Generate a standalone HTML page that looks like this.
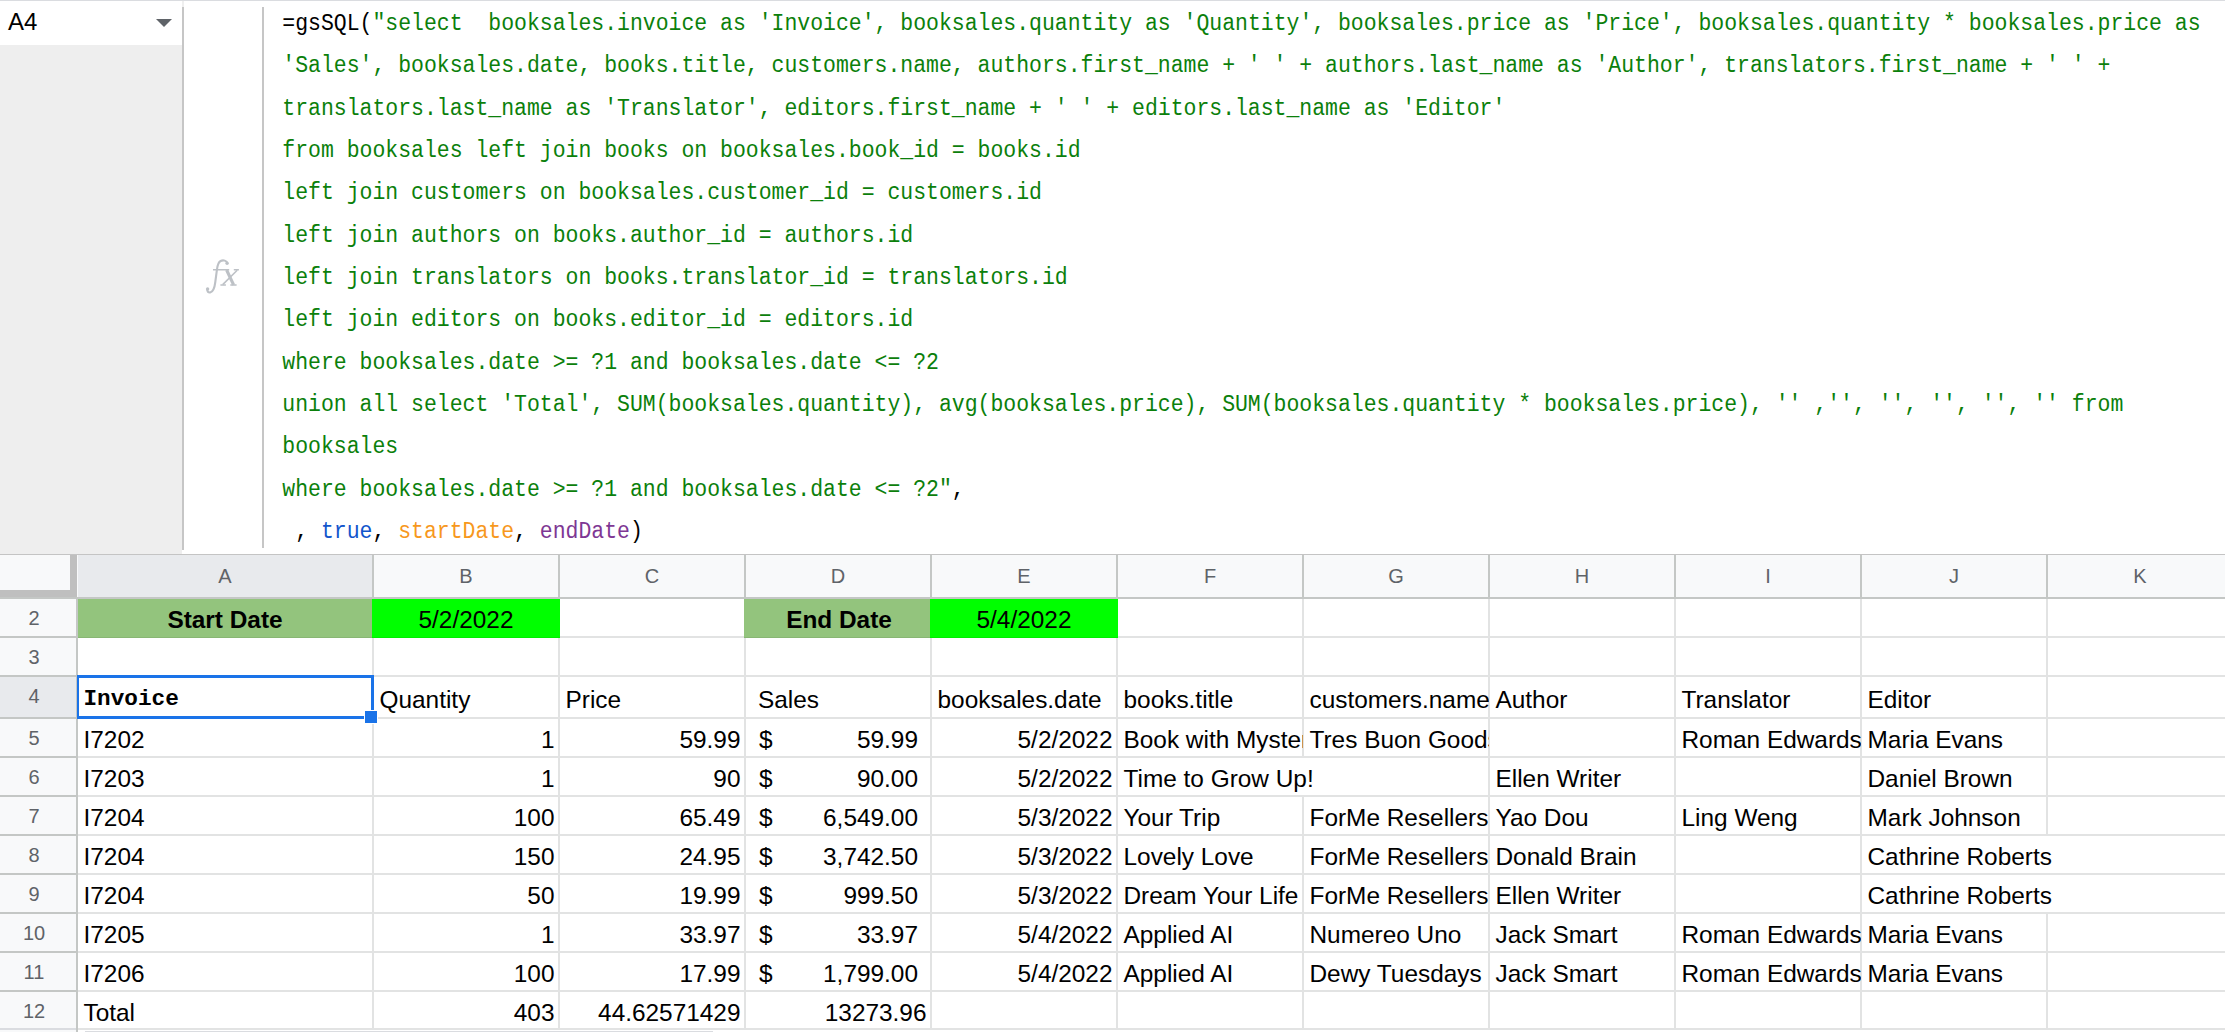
<!DOCTYPE html><html><head><meta charset="utf-8"><style>
*{margin:0;padding:0;box-sizing:border-box}
html,body{width:2225px;height:1032px;overflow:hidden;background:#fff;position:relative}
div,span{position:absolute}
.m{transform:scaleY(1.12);transform-origin:0 17.87px;font-family:"Liberation Mono",monospace;font-size:21.47px;line-height:24.321216px;white-space:pre;color:#0b800b;letter-spacing:-0.009px}
.m span{position:static}
.k{color:#000}
.s{font-family:"Liberation Sans",sans-serif;font-size:24.4px;line-height:27.2548px;white-space:pre;color:#000}
.c{overflow:hidden}
.hd{font-family:"Liberation Sans",sans-serif;font-size:20px;line-height:22.34px;color:#5f6368;text-align:center;white-space:pre}
</style></head><body>
<div style="left:0;top:0;width:2225px;height:1px;background:#dadce0"></div>
<div style="left:0;top:1px;width:182px;height:44px;background:#fff"></div>
<div style="left:0;top:45px;width:182px;height:509px;background:#eeeeee"></div>
<div class="s" style="left:8px;top:8.28px;font-size:24px">A4</div>
<svg style="position:absolute;left:156px;top:19px" width="16" height="8" viewBox="0 0 16 8"><path d="M0 0H16L8 8Z" fill="#5f6368"/></svg>
<div style="left:182px;top:1px;width:2px;height:6px;background:#efefef"></div>
<div style="left:182px;top:7px;width:2px;height:543px;background:#c6c6c6"></div>
<div style="left:262px;top:7px;width:2px;height:541px;background:#c6c6c6"></div>
<svg style="position:absolute;left:200px;top:255px" width="45" height="45" viewBox="0 0 45 45"><g fill="none" stroke="#bdc1c6" stroke-linecap="butt"><path d="M27.4 8.4 C26.8 5.6 23.2 4.6 20.6 6 C18 7.5 17.3 11 16.9 15 L15.3 27 C14.7 32 13.6 36.6 10.2 37.4 C8.2 37.8 6.9 36.2 7.5 34.4" stroke-width="2.1"/><path d="M13 14.8 H29.2 M33.8 14.8 H38.9 M20.4 29.9 H25.9 M30.3 29.9 H36.6" stroke-width="1.5"/><path d="M26.6 15 L33.6 29.8" stroke-width="3.1"/><path d="M37.2 15.3 L22.7 29.6" stroke-width="1.6"/></g><circle cx="27.1" cy="8.3" r="1.7" fill="#bdc1c6"/><circle cx="7.6" cy="34" r="1.7" fill="#bdc1c6"/></svg>
<div class="m" style="left:282.3px;top:11.93px"><span style="color:#000">=gsSQL(</span><span style="color:#0b800b">&quot;select  booksales.invoice as &#x27;Invoice&#x27;, booksales.quantity as &#x27;Quantity&#x27;, booksales.price as &#x27;Price&#x27;, booksales.quantity * booksales.price as</span></div>
<div class="m" style="left:282.3px;top:54.26px"><span style="color:#0b800b">&#x27;Sales&#x27;, booksales.date, books.title, customers.name, authors.first_name + &#x27; &#x27; + authors.last_name as &#x27;Author&#x27;, translators.first_name + &#x27; &#x27; +</span></div>
<div class="m" style="left:282.3px;top:96.59px"><span style="color:#0b800b">translators.last_name as &#x27;Translator&#x27;, editors.first_name + &#x27; &#x27; + editors.last_name as &#x27;Editor&#x27;</span></div>
<div class="m" style="left:282.3px;top:138.92px"><span style="color:#0b800b">from booksales left join books on booksales.book_id = books.id</span></div>
<div class="m" style="left:282.3px;top:181.25px"><span style="color:#0b800b">left join customers on booksales.customer_id = customers.id</span></div>
<div class="m" style="left:282.3px;top:223.58px"><span style="color:#0b800b">left join authors on books.author_id = authors.id</span></div>
<div class="m" style="left:282.3px;top:265.91px"><span style="color:#0b800b">left join translators on books.translator_id = translators.id</span></div>
<div class="m" style="left:282.3px;top:308.24px"><span style="color:#0b800b">left join editors on books.editor_id = editors.id</span></div>
<div class="m" style="left:282.3px;top:350.57px"><span style="color:#0b800b">where booksales.date &gt;= ?1 and booksales.date &lt;= ?2</span></div>
<div class="m" style="left:282.3px;top:392.90px"><span style="color:#0b800b">union all select &#x27;Total&#x27;, SUM(booksales.quantity), avg(booksales.price), SUM(booksales.quantity * booksales.price), &#x27;&#x27; ,&#x27;&#x27;, &#x27;&#x27;, &#x27;&#x27;, &#x27;&#x27;, &#x27;&#x27; from</span></div>
<div class="m" style="left:282.3px;top:435.23px"><span style="color:#0b800b">booksales</span></div>
<div class="m" style="left:282.3px;top:477.56px"><span style="color:#0b800b">where booksales.date &gt;= ?1 and booksales.date &lt;= ?2&quot;</span><span style="color:#000">,</span></div>
<div class="m" style="left:282.3px;top:519.89px"><span style="color:#000"> , </span><span style="color:#1155cc">true</span><span style="color:#000">, </span><span style="color:#f7981d">startDate</span><span style="color:#000">, </span><span style="color:#7e3794">endDate</span><span style="color:#000">)</span></div>
<div style="left:0;top:554px;width:2225px;height:1px;background:#c4c4c4"></div>
<div style="left:0;top:555px;width:2225px;height:42px;background:#f8f9fa"></div>
<div style="left:0;top:599px;width:76px;height:433px;background:#f8f9fa"></div>
<div style="left:78px;top:555px;width:294px;height:42px;background:#e8eaed"></div>
<div class="hd" style="left:78px;top:564.90px;width:294px">A</div>
<div class="hd" style="left:374px;top:564.90px;width:184px">B</div>
<div class="hd" style="left:560px;top:564.90px;width:184px">C</div>
<div class="hd" style="left:746px;top:564.90px;width:184px">D</div>
<div class="hd" style="left:932px;top:564.90px;width:184px">E</div>
<div class="hd" style="left:1118px;top:564.90px;width:184px">F</div>
<div class="hd" style="left:1304px;top:564.90px;width:184px">G</div>
<div class="hd" style="left:1490px;top:564.90px;width:184px">H</div>
<div class="hd" style="left:1676px;top:564.90px;width:184px">I</div>
<div class="hd" style="left:1862px;top:564.90px;width:184px">J</div>
<div class="hd" style="left:2048px;top:564.90px;width:184px">K</div>
<div style="left:0;top:677px;width:76px;height:40px;background:#e8eaed"></div>
<div class="hd" style="left:-1px;top:607.00px;width:70px">2</div>
<div class="hd" style="left:-1px;top:646.00px;width:70px">3</div>
<div class="hd" style="left:-1px;top:684.90px;width:70px">4</div>
<div class="hd" style="left:-1px;top:727.00px;width:70px">5</div>
<div class="hd" style="left:-1px;top:766.00px;width:70px">6</div>
<div class="hd" style="left:-1px;top:805.00px;width:70px">7</div>
<div class="hd" style="left:-1px;top:844.00px;width:70px">8</div>
<div class="hd" style="left:-1px;top:883.00px;width:70px">9</div>
<div class="hd" style="left:-1px;top:922.00px;width:70px">10</div>
<div class="hd" style="left:-1px;top:961.00px;width:70px">11</div>
<div class="hd" style="left:-1px;top:999.50px;width:70px">12</div>
<div style="left:78px;top:599px;width:295px;height:38px;background:#93c47d"></div>
<div style="left:373px;top:599px;width:187px;height:38px;background:#00ff00"></div>
<div style="left:745px;top:599px;width:186px;height:38px;background:#93c47d"></div>
<div style="left:931px;top:599px;width:187px;height:38px;background:#00ff00"></div>
<div style="left:372px;top:599px;width:2px;height:39px;background:#e2e3e3"></div>
<div style="left:372px;top:638px;width:2px;height:39px;background:#e2e3e3"></div>
<div style="left:372px;top:677px;width:2px;height:42px;background:#e2e3e3"></div>
<div style="left:372px;top:719px;width:2px;height:39px;background:#e2e3e3"></div>
<div style="left:372px;top:758px;width:2px;height:39px;background:#e2e3e3"></div>
<div style="left:372px;top:797px;width:2px;height:39px;background:#e2e3e3"></div>
<div style="left:372px;top:836px;width:2px;height:39px;background:#e2e3e3"></div>
<div style="left:372px;top:875px;width:2px;height:39px;background:#e2e3e3"></div>
<div style="left:372px;top:914px;width:2px;height:39px;background:#e2e3e3"></div>
<div style="left:372px;top:953px;width:2px;height:39px;background:#e2e3e3"></div>
<div style="left:372px;top:992px;width:2px;height:38px;background:#e2e3e3"></div>
<div style="left:372px;top:555px;width:2px;height:42px;background:#c4c7c5"></div>
<div style="left:558px;top:599px;width:2px;height:39px;background:#e2e3e3"></div>
<div style="left:558px;top:638px;width:2px;height:39px;background:#e2e3e3"></div>
<div style="left:558px;top:677px;width:2px;height:42px;background:#e2e3e3"></div>
<div style="left:558px;top:719px;width:2px;height:39px;background:#e2e3e3"></div>
<div style="left:558px;top:758px;width:2px;height:39px;background:#e2e3e3"></div>
<div style="left:558px;top:797px;width:2px;height:39px;background:#e2e3e3"></div>
<div style="left:558px;top:836px;width:2px;height:39px;background:#e2e3e3"></div>
<div style="left:558px;top:875px;width:2px;height:39px;background:#e2e3e3"></div>
<div style="left:558px;top:914px;width:2px;height:39px;background:#e2e3e3"></div>
<div style="left:558px;top:953px;width:2px;height:39px;background:#e2e3e3"></div>
<div style="left:558px;top:992px;width:2px;height:38px;background:#e2e3e3"></div>
<div style="left:558px;top:555px;width:2px;height:42px;background:#c4c7c5"></div>
<div style="left:744px;top:599px;width:2px;height:39px;background:#e2e3e3"></div>
<div style="left:744px;top:638px;width:2px;height:39px;background:#e2e3e3"></div>
<div style="left:744px;top:677px;width:2px;height:42px;background:#e2e3e3"></div>
<div style="left:744px;top:719px;width:2px;height:39px;background:#e2e3e3"></div>
<div style="left:744px;top:758px;width:2px;height:39px;background:#e2e3e3"></div>
<div style="left:744px;top:797px;width:2px;height:39px;background:#e2e3e3"></div>
<div style="left:744px;top:836px;width:2px;height:39px;background:#e2e3e3"></div>
<div style="left:744px;top:875px;width:2px;height:39px;background:#e2e3e3"></div>
<div style="left:744px;top:914px;width:2px;height:39px;background:#e2e3e3"></div>
<div style="left:744px;top:953px;width:2px;height:39px;background:#e2e3e3"></div>
<div style="left:744px;top:992px;width:2px;height:38px;background:#e2e3e3"></div>
<div style="left:744px;top:555px;width:2px;height:42px;background:#c4c7c5"></div>
<div style="left:930px;top:599px;width:2px;height:39px;background:#e2e3e3"></div>
<div style="left:930px;top:638px;width:2px;height:39px;background:#e2e3e3"></div>
<div style="left:930px;top:677px;width:2px;height:42px;background:#e2e3e3"></div>
<div style="left:930px;top:719px;width:2px;height:39px;background:#e2e3e3"></div>
<div style="left:930px;top:758px;width:2px;height:39px;background:#e2e3e3"></div>
<div style="left:930px;top:797px;width:2px;height:39px;background:#e2e3e3"></div>
<div style="left:930px;top:836px;width:2px;height:39px;background:#e2e3e3"></div>
<div style="left:930px;top:875px;width:2px;height:39px;background:#e2e3e3"></div>
<div style="left:930px;top:914px;width:2px;height:39px;background:#e2e3e3"></div>
<div style="left:930px;top:953px;width:2px;height:39px;background:#e2e3e3"></div>
<div style="left:930px;top:992px;width:2px;height:38px;background:#e2e3e3"></div>
<div style="left:930px;top:555px;width:2px;height:42px;background:#c4c7c5"></div>
<div style="left:1116px;top:599px;width:2px;height:39px;background:#e2e3e3"></div>
<div style="left:1116px;top:638px;width:2px;height:39px;background:#e2e3e3"></div>
<div style="left:1116px;top:677px;width:2px;height:42px;background:#e2e3e3"></div>
<div style="left:1116px;top:719px;width:2px;height:39px;background:#e2e3e3"></div>
<div style="left:1116px;top:758px;width:2px;height:39px;background:#e2e3e3"></div>
<div style="left:1116px;top:797px;width:2px;height:39px;background:#e2e3e3"></div>
<div style="left:1116px;top:836px;width:2px;height:39px;background:#e2e3e3"></div>
<div style="left:1116px;top:875px;width:2px;height:39px;background:#e2e3e3"></div>
<div style="left:1116px;top:914px;width:2px;height:39px;background:#e2e3e3"></div>
<div style="left:1116px;top:953px;width:2px;height:39px;background:#e2e3e3"></div>
<div style="left:1116px;top:992px;width:2px;height:38px;background:#e2e3e3"></div>
<div style="left:1116px;top:555px;width:2px;height:42px;background:#c4c7c5"></div>
<div style="left:1302px;top:599px;width:2px;height:39px;background:#e2e3e3"></div>
<div style="left:1302px;top:638px;width:2px;height:39px;background:#e2e3e3"></div>
<div style="left:1302px;top:677px;width:2px;height:42px;background:#e2e3e3"></div>
<div style="left:1302px;top:719px;width:2px;height:39px;background:#e2e3e3"></div>
<div style="left:1302px;top:797px;width:2px;height:39px;background:#e2e3e3"></div>
<div style="left:1302px;top:836px;width:2px;height:39px;background:#e2e3e3"></div>
<div style="left:1302px;top:875px;width:2px;height:39px;background:#e2e3e3"></div>
<div style="left:1302px;top:914px;width:2px;height:39px;background:#e2e3e3"></div>
<div style="left:1302px;top:953px;width:2px;height:39px;background:#e2e3e3"></div>
<div style="left:1302px;top:992px;width:2px;height:38px;background:#e2e3e3"></div>
<div style="left:1302px;top:555px;width:2px;height:42px;background:#c4c7c5"></div>
<div style="left:1488px;top:599px;width:2px;height:39px;background:#e2e3e3"></div>
<div style="left:1488px;top:638px;width:2px;height:39px;background:#e2e3e3"></div>
<div style="left:1488px;top:677px;width:2px;height:42px;background:#e2e3e3"></div>
<div style="left:1488px;top:719px;width:2px;height:39px;background:#e2e3e3"></div>
<div style="left:1488px;top:758px;width:2px;height:39px;background:#e2e3e3"></div>
<div style="left:1488px;top:797px;width:2px;height:39px;background:#e2e3e3"></div>
<div style="left:1488px;top:836px;width:2px;height:39px;background:#e2e3e3"></div>
<div style="left:1488px;top:875px;width:2px;height:39px;background:#e2e3e3"></div>
<div style="left:1488px;top:914px;width:2px;height:39px;background:#e2e3e3"></div>
<div style="left:1488px;top:953px;width:2px;height:39px;background:#e2e3e3"></div>
<div style="left:1488px;top:992px;width:2px;height:38px;background:#e2e3e3"></div>
<div style="left:1488px;top:555px;width:2px;height:42px;background:#c4c7c5"></div>
<div style="left:1674px;top:599px;width:2px;height:39px;background:#e2e3e3"></div>
<div style="left:1674px;top:638px;width:2px;height:39px;background:#e2e3e3"></div>
<div style="left:1674px;top:677px;width:2px;height:42px;background:#e2e3e3"></div>
<div style="left:1674px;top:719px;width:2px;height:39px;background:#e2e3e3"></div>
<div style="left:1674px;top:758px;width:2px;height:39px;background:#e2e3e3"></div>
<div style="left:1674px;top:797px;width:2px;height:39px;background:#e2e3e3"></div>
<div style="left:1674px;top:836px;width:2px;height:39px;background:#e2e3e3"></div>
<div style="left:1674px;top:875px;width:2px;height:39px;background:#e2e3e3"></div>
<div style="left:1674px;top:914px;width:2px;height:39px;background:#e2e3e3"></div>
<div style="left:1674px;top:953px;width:2px;height:39px;background:#e2e3e3"></div>
<div style="left:1674px;top:992px;width:2px;height:38px;background:#e2e3e3"></div>
<div style="left:1674px;top:555px;width:2px;height:42px;background:#c4c7c5"></div>
<div style="left:1860px;top:599px;width:2px;height:39px;background:#e2e3e3"></div>
<div style="left:1860px;top:638px;width:2px;height:39px;background:#e2e3e3"></div>
<div style="left:1860px;top:677px;width:2px;height:42px;background:#e2e3e3"></div>
<div style="left:1860px;top:719px;width:2px;height:39px;background:#e2e3e3"></div>
<div style="left:1860px;top:758px;width:2px;height:39px;background:#e2e3e3"></div>
<div style="left:1860px;top:797px;width:2px;height:39px;background:#e2e3e3"></div>
<div style="left:1860px;top:836px;width:2px;height:39px;background:#e2e3e3"></div>
<div style="left:1860px;top:875px;width:2px;height:39px;background:#e2e3e3"></div>
<div style="left:1860px;top:914px;width:2px;height:39px;background:#e2e3e3"></div>
<div style="left:1860px;top:953px;width:2px;height:39px;background:#e2e3e3"></div>
<div style="left:1860px;top:992px;width:2px;height:38px;background:#e2e3e3"></div>
<div style="left:1860px;top:555px;width:2px;height:42px;background:#c4c7c5"></div>
<div style="left:2046px;top:599px;width:2px;height:39px;background:#e2e3e3"></div>
<div style="left:2046px;top:638px;width:2px;height:39px;background:#e2e3e3"></div>
<div style="left:2046px;top:677px;width:2px;height:42px;background:#e2e3e3"></div>
<div style="left:2046px;top:719px;width:2px;height:39px;background:#e2e3e3"></div>
<div style="left:2046px;top:758px;width:2px;height:39px;background:#e2e3e3"></div>
<div style="left:2046px;top:797px;width:2px;height:39px;background:#e2e3e3"></div>
<div style="left:2046px;top:914px;width:2px;height:39px;background:#e2e3e3"></div>
<div style="left:2046px;top:953px;width:2px;height:39px;background:#e2e3e3"></div>
<div style="left:2046px;top:992px;width:2px;height:38px;background:#e2e3e3"></div>
<div style="left:2046px;top:555px;width:2px;height:42px;background:#c4c7c5"></div>
<div style="left:78px;top:636px;width:2147px;height:2px;background:#e2e3e3"></div>
<div style="left:0;top:636px;width:76px;height:2px;background:#c4c7c5"></div>
<div style="left:78px;top:675px;width:2147px;height:2px;background:#e2e3e3"></div>
<div style="left:0;top:675px;width:76px;height:2px;background:#c4c7c5"></div>
<div style="left:78px;top:717px;width:2147px;height:2px;background:#e2e3e3"></div>
<div style="left:0;top:717px;width:76px;height:2px;background:#c4c7c5"></div>
<div style="left:78px;top:756px;width:2147px;height:2px;background:#e2e3e3"></div>
<div style="left:0;top:756px;width:76px;height:2px;background:#c4c7c5"></div>
<div style="left:78px;top:795px;width:2147px;height:2px;background:#e2e3e3"></div>
<div style="left:0;top:795px;width:76px;height:2px;background:#c4c7c5"></div>
<div style="left:78px;top:834px;width:2147px;height:2px;background:#e2e3e3"></div>
<div style="left:0;top:834px;width:76px;height:2px;background:#c4c7c5"></div>
<div style="left:78px;top:873px;width:2147px;height:2px;background:#e2e3e3"></div>
<div style="left:0;top:873px;width:76px;height:2px;background:#c4c7c5"></div>
<div style="left:78px;top:912px;width:2147px;height:2px;background:#e2e3e3"></div>
<div style="left:0;top:912px;width:76px;height:2px;background:#c4c7c5"></div>
<div style="left:78px;top:951px;width:2147px;height:2px;background:#e2e3e3"></div>
<div style="left:0;top:951px;width:76px;height:2px;background:#c4c7c5"></div>
<div style="left:78px;top:990px;width:2147px;height:2px;background:#e2e3e3"></div>
<div style="left:0;top:990px;width:76px;height:2px;background:#c4c7c5"></div>
<div style="left:78px;top:1028px;width:2147px;height:2px;background:#e2e3e3"></div>
<div style="left:0;top:1028px;width:76px;height:2px;background:#dadce0"></div>
<div style="left:0;top:597px;width:2225px;height:2px;background:#c4c7c5"></div>
<div style="left:76px;top:597px;width:2px;height:435px;background:#c4c7c5"></div>
<div style="left:0;top:555px;width:70px;height:35px;background:#f8f9fa"></div>
<div style="left:70px;top:555px;width:7px;height:42px;background:#bfbfbf"></div>
<div style="left:0;top:590px;width:77px;height:7px;background:#bfbfbf"></div>
<div style="left:78px;top:599px;width:294px;height:39px;background:#93c47d"></div>
<div style="left:372px;top:599px;width:188px;height:39px;background:#00ff00"></div>
<div style="left:744px;top:599px;width:186px;height:39px;background:#93c47d"></div>
<div style="left:930px;top:599px;width:188px;height:39px;background:#00ff00"></div>
<div style="left:78px;top:637px;width:482px;height:1px;background:rgba(0,0,0,0.07)"></div>
<div style="left:744px;top:637px;width:374px;height:1px;background:rgba(0,0,0,0.07)"></div>
<div class="c" style="left:78px;top:599px;width:294px;height:37px"><span class="s" style="left:0px;width:100%;text-align:center;top:7.32px;font-weight:bold">Start Date</span></div>
<div class="c" style="left:374px;top:599px;width:184px;height:37px"><span class="s" style="left:0px;width:100%;text-align:center;top:7.32px;">5/2/2022</span></div>
<div class="c" style="left:746px;top:599px;width:184px;height:37px"><span class="s" style="left:1px;width:100%;text-align:center;top:7.32px;font-weight:bold">End Date</span></div>
<div class="c" style="left:932px;top:599px;width:184px;height:37px"><span class="s" style="left:0px;width:100%;text-align:center;top:7.32px;">5/4/2022</span></div>
<div class="c" style="left:78px;top:677px;width:295px;height:40px"><span class="s" style="left:5.5px;top:9.10px;font-family:'Liberation Mono',monospace;font-weight:bold;font-size:22.7px">Invoice</span></div>
<div class="c" style="left:374px;top:677px;width:185px;height:40px"><span class="s" style="left:5.5px;top:8.62px;">Quantity</span></div>
<div class="c" style="left:560px;top:677px;width:185px;height:40px"><span class="s" style="left:5.5px;top:8.62px;">Price</span></div>
<div class="c" style="left:746px;top:677px;width:185px;height:40px"><span class="s" style="left:12px;top:8.62px;">Sales</span></div>
<div class="c" style="left:932px;top:677px;width:185px;height:40px"><span class="s" style="left:5.5px;top:8.62px;">booksales.date</span></div>
<div class="c" style="left:1118px;top:677px;width:185px;height:40px"><span class="s" style="left:5.5px;top:8.62px;">books.title</span></div>
<div class="c" style="left:1304px;top:677px;width:185px;height:40px"><span class="s" style="left:5.5px;top:8.62px;">customers.name</span></div>
<div class="c" style="left:1490px;top:677px;width:185px;height:40px"><span class="s" style="left:5.5px;top:8.62px;">Author</span></div>
<div class="c" style="left:1676px;top:677px;width:185px;height:40px"><span class="s" style="left:5.5px;top:8.62px;">Translator</span></div>
<div class="c" style="left:1862px;top:677px;width:185px;height:40px"><span class="s" style="left:5.5px;top:8.62px;">Editor</span></div>
<div class="c" style="left:78px;top:719px;width:295px;height:37px"><span class="s" style="left:5.5px;top:7.32px;">I7202</span></div>
<div class="c" style="left:374px;top:719px;width:184px;height:37px"><span class="s" style="right:3.5px;top:7.32px">1</span></div>
<div class="c" style="left:560px;top:719px;width:184px;height:37px"><span class="s" style="right:3.5px;top:7.32px">59.99</span></div>
<div class="c" style="left:746px;top:719px;width:184px;height:37px"><span class="s" style="left:13px;top:7.32px">$</span><span class="s" style="right:12px;top:7.32px">59.99</span></div>
<div class="c" style="left:932px;top:719px;width:184px;height:37px"><span class="s" style="right:3.5px;top:7.32px">5/2/2022</span></div>
<div class="c" style="left:1118px;top:719px;width:185px;height:37px"><span class="s" style="left:5.5px;top:7.32px;">Book with Mystery</span></div>
<div class="c" style="left:1304px;top:719px;width:185px;height:37px"><span class="s" style="left:5.5px;top:7.32px;">Tres Buon Goods</span></div>
<div class="c" style="left:1676px;top:719px;width:185px;height:37px"><span class="s" style="left:5.5px;top:7.32px;">Roman Edwards</span></div>
<div class="c" style="left:1862px;top:719px;width:185px;height:37px"><span class="s" style="left:5.5px;top:7.32px;">Maria Evans</span></div>
<div class="c" style="left:78px;top:758px;width:295px;height:37px"><span class="s" style="left:5.5px;top:7.32px;">I7203</span></div>
<div class="c" style="left:374px;top:758px;width:184px;height:37px"><span class="s" style="right:3.5px;top:7.32px">1</span></div>
<div class="c" style="left:560px;top:758px;width:184px;height:37px"><span class="s" style="right:3.5px;top:7.32px">90</span></div>
<div class="c" style="left:746px;top:758px;width:184px;height:37px"><span class="s" style="left:13px;top:7.32px">$</span><span class="s" style="right:12px;top:7.32px">90.00</span></div>
<div class="c" style="left:932px;top:758px;width:184px;height:37px"><span class="s" style="right:3.5px;top:7.32px">5/2/2022</span></div>
<div class="c" style="left:1118px;top:758px;width:371px;height:37px"><span class="s" style="left:5.5px;top:7.32px;">Time to Grow Up!</span></div>
<div class="c" style="left:1490px;top:758px;width:185px;height:37px"><span class="s" style="left:5.5px;top:7.32px;">Ellen Writer</span></div>
<div class="c" style="left:1862px;top:758px;width:185px;height:37px"><span class="s" style="left:5.5px;top:7.32px;">Daniel Brown</span></div>
<div class="c" style="left:78px;top:797px;width:295px;height:37px"><span class="s" style="left:5.5px;top:7.32px;">I7204</span></div>
<div class="c" style="left:374px;top:797px;width:184px;height:37px"><span class="s" style="right:3.5px;top:7.32px">100</span></div>
<div class="c" style="left:560px;top:797px;width:184px;height:37px"><span class="s" style="right:3.5px;top:7.32px">65.49</span></div>
<div class="c" style="left:746px;top:797px;width:184px;height:37px"><span class="s" style="left:13px;top:7.32px">$</span><span class="s" style="right:12px;top:7.32px">6,549.00</span></div>
<div class="c" style="left:932px;top:797px;width:184px;height:37px"><span class="s" style="right:3.5px;top:7.32px">5/3/2022</span></div>
<div class="c" style="left:1118px;top:797px;width:185px;height:37px"><span class="s" style="left:5.5px;top:7.32px;">Your Trip</span></div>
<div class="c" style="left:1304px;top:797px;width:185px;height:37px"><span class="s" style="left:5.5px;top:7.32px;">ForMe Resellers</span></div>
<div class="c" style="left:1490px;top:797px;width:185px;height:37px"><span class="s" style="left:5.5px;top:7.32px;">Yao Dou</span></div>
<div class="c" style="left:1676px;top:797px;width:185px;height:37px"><span class="s" style="left:5.5px;top:7.32px;">Ling Weng</span></div>
<div class="c" style="left:1862px;top:797px;width:185px;height:37px"><span class="s" style="left:5.5px;top:7.32px;">Mark Johnson</span></div>
<div class="c" style="left:78px;top:836px;width:295px;height:37px"><span class="s" style="left:5.5px;top:7.32px;">I7204</span></div>
<div class="c" style="left:374px;top:836px;width:184px;height:37px"><span class="s" style="right:3.5px;top:7.32px">150</span></div>
<div class="c" style="left:560px;top:836px;width:184px;height:37px"><span class="s" style="right:3.5px;top:7.32px">24.95</span></div>
<div class="c" style="left:746px;top:836px;width:184px;height:37px"><span class="s" style="left:13px;top:7.32px">$</span><span class="s" style="right:12px;top:7.32px">3,742.50</span></div>
<div class="c" style="left:932px;top:836px;width:184px;height:37px"><span class="s" style="right:3.5px;top:7.32px">5/3/2022</span></div>
<div class="c" style="left:1118px;top:836px;width:185px;height:37px"><span class="s" style="left:5.5px;top:7.32px;">Lovely Love</span></div>
<div class="c" style="left:1304px;top:836px;width:185px;height:37px"><span class="s" style="left:5.5px;top:7.32px;">ForMe Resellers</span></div>
<div class="c" style="left:1490px;top:836px;width:185px;height:37px"><span class="s" style="left:5.5px;top:7.32px;">Donald Brain</span></div>
<div class="c" style="left:1862px;top:836px;width:371px;height:37px"><span class="s" style="left:5.5px;top:7.32px;">Cathrine Roberts</span></div>
<div class="c" style="left:78px;top:875px;width:295px;height:37px"><span class="s" style="left:5.5px;top:7.32px;">I7204</span></div>
<div class="c" style="left:374px;top:875px;width:184px;height:37px"><span class="s" style="right:3.5px;top:7.32px">50</span></div>
<div class="c" style="left:560px;top:875px;width:184px;height:37px"><span class="s" style="right:3.5px;top:7.32px">19.99</span></div>
<div class="c" style="left:746px;top:875px;width:184px;height:37px"><span class="s" style="left:13px;top:7.32px">$</span><span class="s" style="right:12px;top:7.32px">999.50</span></div>
<div class="c" style="left:932px;top:875px;width:184px;height:37px"><span class="s" style="right:3.5px;top:7.32px">5/3/2022</span></div>
<div class="c" style="left:1118px;top:875px;width:185px;height:37px"><span class="s" style="left:5.5px;top:7.32px;">Dream Your Life</span></div>
<div class="c" style="left:1304px;top:875px;width:185px;height:37px"><span class="s" style="left:5.5px;top:7.32px;">ForMe Resellers</span></div>
<div class="c" style="left:1490px;top:875px;width:185px;height:37px"><span class="s" style="left:5.5px;top:7.32px;">Ellen Writer</span></div>
<div class="c" style="left:1862px;top:875px;width:371px;height:37px"><span class="s" style="left:5.5px;top:7.32px;">Cathrine Roberts</span></div>
<div class="c" style="left:78px;top:914px;width:295px;height:37px"><span class="s" style="left:5.5px;top:7.32px;">I7205</span></div>
<div class="c" style="left:374px;top:914px;width:184px;height:37px"><span class="s" style="right:3.5px;top:7.32px">1</span></div>
<div class="c" style="left:560px;top:914px;width:184px;height:37px"><span class="s" style="right:3.5px;top:7.32px">33.97</span></div>
<div class="c" style="left:746px;top:914px;width:184px;height:37px"><span class="s" style="left:13px;top:7.32px">$</span><span class="s" style="right:12px;top:7.32px">33.97</span></div>
<div class="c" style="left:932px;top:914px;width:184px;height:37px"><span class="s" style="right:3.5px;top:7.32px">5/4/2022</span></div>
<div class="c" style="left:1118px;top:914px;width:185px;height:37px"><span class="s" style="left:5.5px;top:7.32px;">Applied AI</span></div>
<div class="c" style="left:1304px;top:914px;width:185px;height:37px"><span class="s" style="left:5.5px;top:7.32px;">Numereo Uno</span></div>
<div class="c" style="left:1490px;top:914px;width:185px;height:37px"><span class="s" style="left:5.5px;top:7.32px;">Jack Smart</span></div>
<div class="c" style="left:1676px;top:914px;width:185px;height:37px"><span class="s" style="left:5.5px;top:7.32px;">Roman Edwards</span></div>
<div class="c" style="left:1862px;top:914px;width:185px;height:37px"><span class="s" style="left:5.5px;top:7.32px;">Maria Evans</span></div>
<div class="c" style="left:78px;top:953px;width:295px;height:37px"><span class="s" style="left:5.5px;top:7.32px;">I7206</span></div>
<div class="c" style="left:374px;top:953px;width:184px;height:37px"><span class="s" style="right:3.5px;top:7.32px">100</span></div>
<div class="c" style="left:560px;top:953px;width:184px;height:37px"><span class="s" style="right:3.5px;top:7.32px">17.99</span></div>
<div class="c" style="left:746px;top:953px;width:184px;height:37px"><span class="s" style="left:13px;top:7.32px">$</span><span class="s" style="right:12px;top:7.32px">1,799.00</span></div>
<div class="c" style="left:932px;top:953px;width:184px;height:37px"><span class="s" style="right:3.5px;top:7.32px">5/4/2022</span></div>
<div class="c" style="left:1118px;top:953px;width:185px;height:37px"><span class="s" style="left:5.5px;top:7.32px;">Applied AI</span></div>
<div class="c" style="left:1304px;top:953px;width:185px;height:37px"><span class="s" style="left:5.5px;top:7.32px;">Dewy Tuesdays</span></div>
<div class="c" style="left:1490px;top:953px;width:185px;height:37px"><span class="s" style="left:5.5px;top:7.32px;">Jack Smart</span></div>
<div class="c" style="left:1676px;top:953px;width:185px;height:37px"><span class="s" style="left:5.5px;top:7.32px;">Roman Edwards</span></div>
<div class="c" style="left:1862px;top:953px;width:185px;height:37px"><span class="s" style="left:5.5px;top:7.32px;">Maria Evans</span></div>
<div class="c" style="left:78px;top:992px;width:295px;height:36px"><span class="s" style="left:5.5px;top:6.92px;">Total</span></div>
<div class="c" style="left:374px;top:992px;width:184px;height:36px"><span class="s" style="right:3.5px;top:6.92px">403</span></div>
<div class="c" style="left:560px;top:992px;width:184px;height:36px"><span class="s" style="right:3.5px;top:6.92px">44.62571429</span></div>
<div class="c" style="left:746px;top:992px;width:184px;height:36px"><span class="s" style="right:3.5px;top:6.92px">13273.96</span></div>
<div style="left:77px;top:675px;width:297px;height:44px;border:3px solid #1a73e8;border-left-width:2px"></div>
<div style="left:364px;top:710px;width:14px;height:14px;background:#fff"></div>
<div style="left:365px;top:711px;width:12px;height:12px;background:#1a73e8"></div>
<div style="left:85px;top:1031px;width:628px;height:1px;background:#dadce0"></div>
</body></html>
